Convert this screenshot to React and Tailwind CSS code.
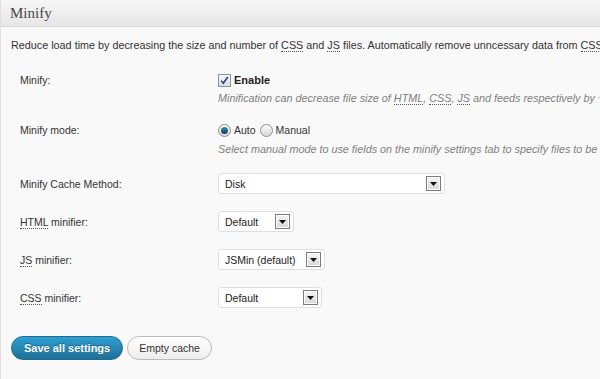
import React from 'react';

const Abbr = ({ children }) => (
    <span className="border-b border-dotted border-[#555]">{children}</span>
);

// select box with the old square arrow button
const Select = ({ value, width }) => (
    <div
        className="h-[21px] bg-white border border-[#dfdfdf] rounded-[3px] flex items-center justify-between pl-[6px] pr-[3px] text-[10.5px] text-[#222]"
        style={{ width }}
    >
        <span>{value}</span>
        <span className="w-[15px] h-[15px] border border-[#7c7c7c] bg-gradient-to-b from-[#f4f4f4] to-[#d8d8d8] flex items-center justify-center shadow-[inset_0_0_0_1px_#fff]">
            <svg width="7" height="4" viewBox="0 0 7 4">
                <path d="M0 0h7L3.5 4z" fill="#111" />
            </svg>
        </span>
    </div>
);

const Row = ({ label, children, className = '' }) => (
    <div className={`flex items-center pl-[19px] ${className}`}>
        <div className="w-[198px] shrink-0 text-[#333]">{label}</div>
        {children}
    </div>
);

const Radio = ({ checked }) => (
    <span className="w-[13px] h-[13px] rounded-full border border-[#8e8e8e] bg-gradient-to-b from-[#fafafa] to-[#dadada] flex items-center justify-center">
        {checked && <span className="w-[7px] h-[7px] rounded-full bg-gradient-to-b from-[#3d8fb6] to-[#0b3e5a]" />}
    </span>
);

export default function App() {
    return (
        <div
            className="w-[600px] h-[379px] overflow-hidden bg-[#f9f9f9] border-l border-[#dfdfdf] text-[10.5px] leading-[14px]"
            style={{ fontFamily: '"Liberation Sans", Arial, sans-serif' }}
        >
            {/* Header */}
            <div className="h-[27px] bg-gradient-to-b from-[#f6f6f6] to-[#e6e6e6] border-b border-[#d8d8d8] pl-[9px] flex items-center">
                <h3
                    className="text-[15px] text-[#464646] leading-none pt-[1px]"
                    style={{ fontFamily: '"Liberation Serif", Georgia, serif' }}
                >
                    Minify
                </h3>
            </div>

            <p className="mt-[11px] pl-[10px] whitespace-nowrap text-[#333] text-[10.8px]">
                Reduce load time by decreasing the size and number of <Abbr>CSS</Abbr> and <Abbr>JS</Abbr> files. Automatically remove unncessary data from <Abbr>CSS</Abbr>, <Abbr>JS</Abbr>, feed, page and post <Abbr>HTML</Abbr>.
            </p>

            <Row label="Minify:" className="mt-[21px]">
                <div className="flex items-center gap-[3px]">
                    <span className="w-[13px] h-[13px] border border-[#8796a6] bg-gradient-to-b from-[#f4f7fb] to-[#d6dee8] flex items-center justify-center">
                        <svg width="9" height="9" viewBox="0 0 9 9">
                            <path d="M1.2 4.6l2.1 2.6L7.8 1" stroke="#2b3f66" strokeWidth="1.5" fill="none" />
                        </svg>
                    </span>
                    <span className="font-bold text-[#222] text-[11px]">Enable</span>
                </div>
            </Row>
            <div className="pl-[217px] mt-[4px] italic text-[#808080] whitespace-nowrap text-[10.8px]">
                Minification can decrease file size of <Abbr>HTML</Abbr>, <Abbr>CSS</Abbr>, <Abbr>JS</Abbr> and feeds respectively by ~10% on average.
            </div>

            <Row label="Minify mode:" className="mt-[18px]">
                <div className="flex items-center text-[#333]">
                    <Radio checked />
                    <span className="ml-[3px]">Auto</span>
                    <span className="ml-[4px]"><Radio /></span>
                    <span className="ml-[3px]">Manual</span>
                </div>
            </Row>
            <div className="pl-[217px] mt-[5px] italic text-[#808080] whitespace-nowrap text-[10.8px]">
                Select manual mode to use fields on the minify settings tab to specify files to be minified.
            </div>

            <Row label="Minify Cache Method:" className="mt-[17px]">
                <Select value="Disk" width={227} />
            </Row>
            <Row label={<><Abbr>HTML</Abbr> minifier:</>} className="mt-[17px]">
                <Select value="Default" width={76} />
            </Row>
            <Row label={<><Abbr>JS</Abbr> minifier:</>} className="mt-[17px]">
                <Select value="JSMin (default)" width={107} />
            </Row>
            <Row label={<><Abbr>CSS</Abbr> minifier:</>} className="mt-[17px]">
                <Select value="Default" width={104} />
            </Row>

            {/* Buttons */}
            <div className="flex items-center gap-[4px] pl-[10px] mt-[28px]">
                <button className="h-[24px] px-[12px] rounded-full border border-[#1e6c90] bg-gradient-to-b from-[#2e9fd2] to-[#1f6f96] text-white font-bold text-[11px] [text-shadow:0_-1px_0_rgba(0,0,0,0.3)]">
                    Save all settings
                </button>
                <button className="h-[24px] px-[11px] rounded-full border border-[#bbb] bg-gradient-to-b from-white to-[#ededed] text-[#333] text-[10.5px]">
                    Empty cache
                </button>
            </div>
        </div>
    );
}
